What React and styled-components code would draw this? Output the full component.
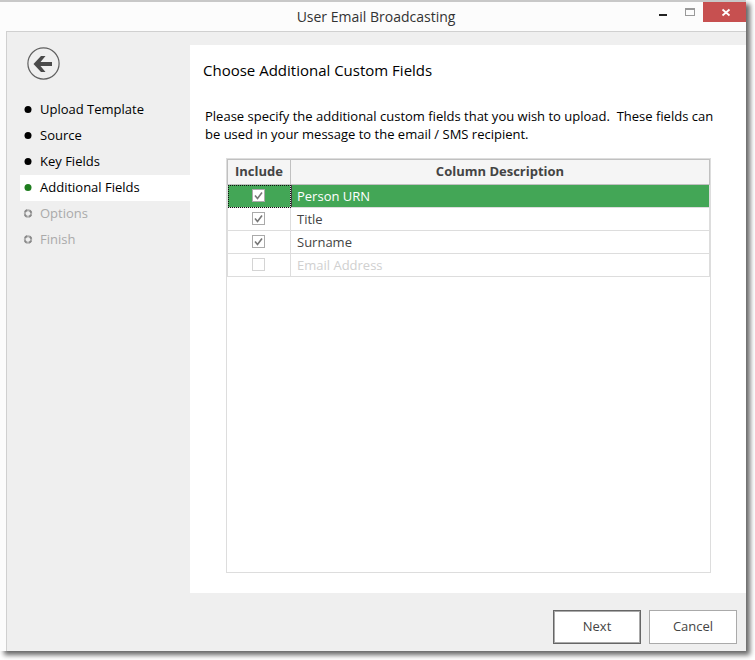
import { useState } from 'react'
import styled, { createGlobalStyle } from 'styled-components'

const GlobalStyle = createGlobalStyle`
  * {
    box-sizing: border-box;
  }

  body {
    margin: 0;
    background: #fff;
    font-family: 'Open Sans', 'Noto Sans', sans-serif;
    font-size: 13px;
    line-height: 18px;
  }

  button {
    font: inherit;
  }
`

const Page = styled.div`
  display: flex;
  min-height: 100vh;
  padding: 0 9px 9px 0;
`

const Window = styled.div`
  display: flex;
  flex: 1;
  flex-direction: column;
  border-top: 2px solid #c8c8c8;
  background: #fcfcfc;
  box-shadow: 4px 4px 5px rgb(0 0 0 / 60%);
`

const TitleBar = styled.header`
  display: grid;
  grid-template-columns: 1fr auto 1fr;
  height: 29px;
  margin-left: 6px;
`

const WindowTitle = styled.h1`
  grid-column: 2;
  margin: 0;
  color: #333;
  font-size: 14px;
  font-weight: 400;
  line-height: 29px;
`

const WindowControls = styled.div`
  display: flex;
  align-items: flex-start;
  justify-content: flex-end;
`

const ControlButton = styled.button`
  display: grid;
  width: ${({ $close }) => ($close ? '43px' : '27px')};
  height: 20px;
  padding: 0;
  place-items: center;
  border: 0;
  background: ${({ $close }) => ($close ? '#c75050' : 'transparent')};
`

const Body = styled.div`
  display: grid;
  flex: 1;
  grid-template-columns: 183px 1fr;
  grid-template-rows: 1fr auto;
  margin-left: 6px;
  padding-top: 13px;
  border-top: 1px solid #d0d0d0;
  border-left: 1px solid #d0d0d0;
  background: #efefef;
`

const Sidebar = styled.aside`
  padding: 2px 0 0 13px;
`

const BackButton = styled.button`
  display: block;
  width: 34px;
  height: 34px;
  margin: 0 0 16px 7px;
  padding: 0;
  border: 0;
  background: transparent;
  cursor: pointer;
`

const StepList = styled.ol`
  margin: 0;
  padding: 0;
  list-style: none;
`

const stepColors = {
  done: '#000',
  current: '#000',
  pending: '#aaa',
}

const Step = styled.li`
  display: flex;
  height: 26px;
  align-items: center;
  gap: 7px;
  padding: 0 0 2px 3px;
  color: ${({ $status }) => stepColors[$status]};
  background: ${({ $status }) => ($status === 'current' ? '#fff' : 'transparent')};
`

const Content = styled.main`
  display: flex;
  flex-direction: column;
  padding: 15px 20px 20px 13px;
  background: #fff;
`

const Heading = styled.h2`
  margin: 0;
  color: #000;
  font-size: 15px;
  font-weight: 400;
  line-height: 20px;
`

const Description = styled.p`
  margin: 27px 0 15px 2px;
  white-space: pre-wrap;
`

const GridFrame = styled.div`
  flex: 1;
  margin: 0 15px 0 23px;
  border: 1px solid #ddd;
`

const FieldTable = styled.table`
  width: 100%;
  border-collapse: collapse;
  table-layout: fixed;
  color: #444;
`

const HeaderCell = styled.th`
  width: ${({ $narrow }) => ($narrow ? '63px' : 'auto')};
  height: 25px;
  padding: 0 0 2px;
  border: 1px solid #c0c0c0;
  background: #f5f5f5;
  font-weight: 700;
`

const Row = styled.tr`
  color: ${({ $selected, $disabled }) =>
    $selected ? '#fff' : $disabled ? '#d0d0d0' : '#444'};
  background: ${({ $selected }) => ($selected ? '#43a656' : '#fff')};
`

const Cell = styled.td`
  height: 23px;
  padding: 0 6px;
  border: 1px solid #ddd;
  line-height: 20px;
`

const CheckCell = styled(Cell)`
  padding: 0 1px 1px 0;
  box-shadow: ${({ $focused }) => ($focused ? '0 0 0 1px #444' : 'none')};
  outline: ${({ $focused }) => ($focused ? '1px dotted #111' : 'none')};
  outline-offset: -1px;
`

const CheckWrap = styled.div`
  position: relative;
  width: 13px;
  height: 13px;
  margin: 0 auto;

  svg {
    position: absolute;
    inset: 0;
    pointer-events: none;
  }
`

const Checkbox = styled.input`
  display: block;
  width: 13px;
  height: 13px;
  margin: 0;
  appearance: none;
  border: 1px solid #aaa;
  background: #fff;

  &:disabled {
    border-color: #d4d4d4;
  }
`

const Footer = styled.footer`
  display: flex;
  grid-column: 1 / -1;
  justify-content: flex-end;
  gap: 8px;
  padding: 17px 9px 7px;
`

const DialogButton = styled.button`
  width: 88px;
  height: 34px;
  padding: 0 0 2px;
  border: 1px solid ${({ $primary }) => ($primary ? '#666' : '#aaa')};
  color: #444;
  background: #fff;
  box-shadow: ${({ $primary }) => ($primary ? 'inset 0 0 0 1px #aaa' : 'none')};
  cursor: pointer;
`

const steps = [
  { label: 'Upload Template', status: 'done' },
  { label: 'Source', status: 'done' },
  { label: 'Key Fields', status: 'done' },
  { label: 'Additional Fields', status: 'current' },
  { label: 'Options', status: 'pending' },
  { label: 'Finish', status: 'pending' },
]

const initialFields = [
  { id: 'urn', name: 'Person URN', included: true },
  { id: 'title', name: 'Title', included: true },
  { id: 'surname', name: 'Surname', included: true },
  { id: 'email', name: 'Email Address', included: false, disabled: true },
]

function StepMarker({ status }) {
  return (
    <svg aria-hidden="true" height="10" viewBox="0 0 10 10" width="10">
      {status === 'pending' ? (
        <>
          <circle cx="5" cy="5.5" fill="none" r="3.2" stroke="#b0b0b0" strokeWidth="2" />
          <circle
            cx="5"
            cy="5.5"
            fill="none"
            r="3.4"
            stroke="#888"
            strokeDasharray="2.67"
            strokeDashoffset="-1.33"
            strokeWidth="1.8"
          />
        </>
      ) : (
        <circle cx="5" cy="5.5" fill={status === 'current' ? '#1e7d1e' : '#000'} r="3.5" />
      )}
    </svg>
  )
}

function App() {
  const [fields, setFields] = useState(initialFields)
  const [selectedId, setSelectedId] = useState('urn')

  const toggleField = (id) =>
    setFields((current) =>
      current.map((field) =>
        field.id === id ? { ...field, included: !field.included } : field,
      ),
    )

  return (
    <Page>
      <GlobalStyle />
      <Window>
        <TitleBar>
          <WindowTitle>User Email Broadcasting</WindowTitle>
          <WindowControls>
            <ControlButton aria-label="Minimize" type="button">
              <svg height="20" width="27">
                <path d="M10 12h8v2h-8z" fill="#222" />
              </svg>
            </ControlButton>
            <ControlButton aria-label="Maximize" type="button">
              <svg height="20" width="27">
                <path d="M9 6h10v8H9zM10 8v5h8V8z" fill="#999" fillRule="evenodd" />
              </svg>
            </ControlButton>
            <ControlButton $close aria-label="Close" type="button">
              <svg height="20" width="43">
                <path d="M19.5 7.5l7 6M26.5 7.5l-7 6" stroke="#fff" strokeWidth="1.8" />
              </svg>
            </ControlButton>
          </WindowControls>
        </TitleBar>

        <Body>
          <Sidebar>
            <BackButton aria-label="Back" type="button">
              <svg height="34" viewBox="0 0 34 34" width="34">
                <circle cx="16.5" cy="16.5" fill="none" r="15.6" stroke="#606060" strokeWidth="1.2" />
                <path
                  d="M6.5 17l7.5-8h4.5l-5 6H25v4H13.5l5 6H14z"
                  fill="#4a4a4a"
                />
              </svg>
            </BackButton>
            <StepList>
              {steps.map(({ label, status }) => (
                <Step
                  $status={status}
                  aria-current={status === 'current' ? 'step' : undefined}
                  key={label}
                >
                  <StepMarker status={status} />
                  {label}
                </Step>
              ))}
            </StepList>
          </Sidebar>

          <Content>
            <Heading>Choose Additional Custom Fields</Heading>
            <Description>
              {
                'Please specify the additional custom fields that you wish to upload.  These fields can be used in your message to the email / SMS recipient.'
              }
            </Description>
            <GridFrame>
              <FieldTable>
                <thead>
                  <tr>
                    <HeaderCell $narrow>Include</HeaderCell>
                    <HeaderCell>Column Description</HeaderCell>
                  </tr>
                </thead>
                <tbody>
                  {fields.map((field) => (
                    <Row
                      $disabled={field.disabled}
                      $selected={field.id === selectedId}
                      key={field.id}
                      onClick={() => !field.disabled && setSelectedId(field.id)}
                    >
                      <CheckCell $focused={field.id === selectedId}>
                        <CheckWrap>
                          <Checkbox
                            aria-labelledby={`field-${field.id}`}
                            checked={field.included}
                            disabled={field.disabled}
                            onChange={() => toggleField(field.id)}
                            type="checkbox"
                          />
                          {field.included && (
                            <svg aria-hidden="true" height="13" width="13">
                              <path
                                d="M3 6.5l2.5 3L10 3.5"
                                fill="none"
                                stroke="#777"
                                strokeWidth="1.6"
                              />
                            </svg>
                          )}
                        </CheckWrap>
                      </CheckCell>
                      <Cell id={`field-${field.id}`}>{field.name}</Cell>
                    </Row>
                  ))}
                </tbody>
              </FieldTable>
            </GridFrame>
          </Content>

          <Footer>
            <DialogButton $primary type="button">
              Next
            </DialogButton>
            <DialogButton type="button">Cancel</DialogButton>
          </Footer>
        </Body>
      </Window>
    </Page>
  )
}

export default App
